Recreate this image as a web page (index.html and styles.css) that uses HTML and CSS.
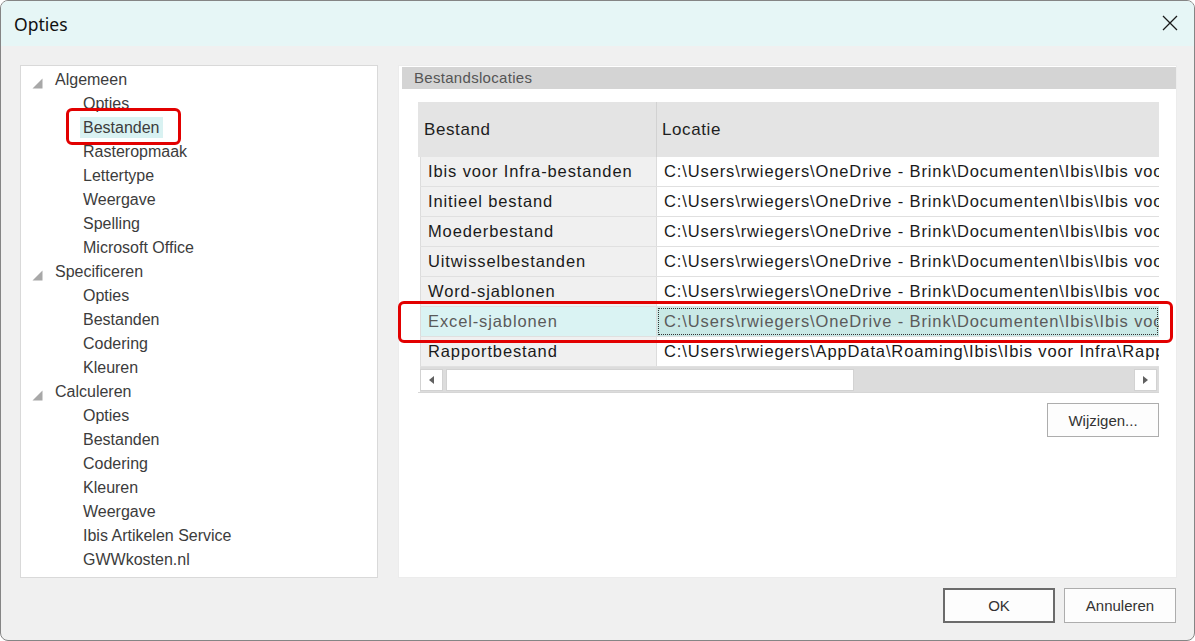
FILE: index.html
```html
<!DOCTYPE html>
<html lang="nl">
<head>
<meta charset="utf-8">
<title>Opties</title>
<link rel="stylesheet" href="styles.css">
</head>
<body>
<div class="window">
  <div class="titlebar">
    <span class="title">Opties</span>
    <svg class="close" width="16" height="16" viewBox="0 0 16 16"><path d="M1 1 L15 15 M15 1 L1 15" stroke="#1a1a1a" stroke-width="1.3" fill="none"/></svg>
  </div>
  <div class="main">
    <div class="tree">
      <div class="node parent"><svg class="arrow" width="11" height="11" viewBox="0 0 11 11"><polygon points="10.5,0.5 10.5,10.5 0.5,10.5" fill="#a8a8a8"/></svg><span class="label">Algemeen</span></div>
      <div class="node child"><span class="label">Opties</span></div>
      <div class="node child"><span class="label selected">Bestanden</span></div>
      <div class="node child"><span class="label">Rasteropmaak</span></div>
      <div class="node child"><span class="label">Lettertype</span></div>
      <div class="node child"><span class="label">Weergave</span></div>
      <div class="node child"><span class="label">Spelling</span></div>
      <div class="node child"><span class="label">Microsoft Office</span></div>
      <div class="node parent"><svg class="arrow" width="11" height="11" viewBox="0 0 11 11"><polygon points="10.5,0.5 10.5,10.5 0.5,10.5" fill="#a8a8a8"/></svg><span class="label">Specificeren</span></div>
      <div class="node child"><span class="label">Opties</span></div>
      <div class="node child"><span class="label">Bestanden</span></div>
      <div class="node child"><span class="label">Codering</span></div>
      <div class="node child"><span class="label">Kleuren</span></div>
      <div class="node parent"><svg class="arrow" width="11" height="11" viewBox="0 0 11 11"><polygon points="10.5,0.5 10.5,10.5 0.5,10.5" fill="#a8a8a8"/></svg><span class="label">Calculeren</span></div>
      <div class="node child"><span class="label">Opties</span></div>
      <div class="node child"><span class="label">Bestanden</span></div>
      <div class="node child"><span class="label">Codering</span></div>
      <div class="node child"><span class="label">Kleuren</span></div>
      <div class="node child"><span class="label">Weergave</span></div>
      <div class="node child"><span class="label">Ibis Artikelen Service</span></div>
      <div class="node child"><span class="label">GWWkosten.nl</span></div>
    </div>
    <div class="panel">
      <div class="panel-head">Bestandslocaties</div>
      <div class="grid">
        <div class="grid-head">
          <div class="hcell c1">Bestand</div>
          <div class="hcell c2">Locatie</div>
        </div>
        <div class="rows">
          <div class="row"><div class="cell c1">Ibis voor Infra-bestanden</div><div class="cell c2">C:\Users\rwiegers\OneDrive - Brink\Documenten\Ibis\Ibis voor Infra</div></div>
          <div class="row"><div class="cell c1">Initieel bestand</div><div class="cell c2">C:\Users\rwiegers\OneDrive - Brink\Documenten\Ibis\Ibis voor Infra</div></div>
          <div class="row"><div class="cell c1">Moederbestand</div><div class="cell c2">C:\Users\rwiegers\OneDrive - Brink\Documenten\Ibis\Ibis voor Infra</div></div>
          <div class="row"><div class="cell c1">Uitwisselbestanden</div><div class="cell c2">C:\Users\rwiegers\OneDrive - Brink\Documenten\Ibis\Ibis voor Infra</div></div>
          <div class="row"><div class="cell c1">Word-sjablonen</div><div class="cell c2">C:\Users\rwiegers\OneDrive - Brink\Documenten\Ibis\Ibis voor Infra</div></div>
          <div class="row sel"><div class="cell c1">Excel-sjablonen</div><div class="cell c2">C:\Users\rwiegers\OneDrive - Brink\Documenten\Ibis\Ibis voor Infra</div></div>
          <div class="row"><div class="cell c1">Rapportbestand</div><div class="cell c2">C:\Users\rwiegers\AppData\Roaming\Ibis\Ibis voor Infra\Rapporten</div></div>
        </div>
        <div class="hscroll">
          <div class="sbtn"><svg width="5" height="8" viewBox="0 0 5 8"><polygon points="5,0 5,8 0,4" fill="#606060"/></svg></div>
          <div class="thumb"></div>
          <div class="track"></div>
          <div class="sbtn"><svg width="5" height="8" viewBox="0 0 5 8"><polygon points="0,0 0,8 5,4" fill="#606060"/></svg></div>
        </div>
      </div>
      <div class="panel-actions">
        <button class="btn">Wijzigen...</button>
      </div>
    </div>
  </div>
  <div class="footer">
    <button class="btn default">OK</button>
    <button class="btn">Annuleren</button>
  </div>
  <div class="mark mark-tree"></div>
  <div class="mark mark-row"></div>
</div>
</body>
</html>
```
FILE: styles.css
```css
html, body {
  margin: 0;
  padding: 0;
  background: #ffffff;
}
.window {
  position: relative;
  width: 1195px;
  height: 641px;
  box-sizing: border-box;
  border: 1px solid #858585;
  border-radius: 8px;
  overflow: hidden;
  background: #f0f0f0;
  display: flex;
  flex-direction: column;
  font-family: "Liberation Sans", Arial, sans-serif;
}
.titlebar {
  height: 45px;
  flex: none;
  background: #e6f6f6;
  display: flex;
  align-items: center;
  justify-content: space-between;
  padding: 0 16px 0 13px;
}
.title {
  font-family: "Noto Sans", "Segoe UI", sans-serif;
  font-size: 17.5px;
  color: #111;
}
.close {
  display: block;
  margin-top: -1px;
}
.main {
  flex: none;
  height: 513px;
  display: flex;
  gap: 20px;
  padding: 19px 17px 0 19px;
}
.tree {
  width: 358px;
  box-sizing: border-box;
  background: #ffffff;
  border: 1px solid #d9d9d9;
  padding-top: 3px;
}
.node {
  height: 24px;
  display: flex;
  align-items: flex-start;
  font-size: 16px;
  color: #3c3c3c;
}
.node.parent {
  padding-left: 11px;
}
.node.child {
  padding-left: 59px;
}
.arrow {
  margin-top: 9px;
  margin-right: 9px;
  flex: none;
}
.label {
  display: inline-block;
  line-height: 21px;
  padding: 0 3px;
  white-space: nowrap;
}
.label.selected {
  background: #d9f2f2;
}
.panel {
  flex: 1;
  background: #ffffff;
  border: 1px solid #ececec;
  box-sizing: border-box;
  padding: 1px 0 0 3px;
}
.panel-head {
  height: 22px;
  line-height: 22px;
  background: #d4d4d4;
  color: #555;
  font-size: 15px;
  letter-spacing: 0.3px;
  padding-left: 12px;
}
.grid {
  margin: 13px 0 0 16px;
  width: 741px;
  border-bottom: 1px solid #d6d6d6;
}
.grid-head {
  height: 55px;
  display: flex;
  background: #e4e4e4;
  font-size: 17px;
  letter-spacing: 0.6px;
  color: #1e1e1e;
  align-items: center;
}
.hcell.c1 {
  width: 239px;
  box-sizing: border-box;
  padding-left: 6px;
  align-self: stretch;
  display: flex;
  align-items: center;
  border-right: 1px solid #d2d2d2;
}
.hcell.c2 {
  padding-left: 5px;
}
.rows {
  padding-left: 2px;
}
.row {
  display: flex;
  height: 30px;
  box-sizing: border-box;
  border-bottom: 1px solid #e0e0e0;
  font-size: 16.5px;
  letter-spacing: 0.88px;
  color: #1a1a1a;
}
.cell {
  line-height: 29px;
  white-space: nowrap;
  overflow: hidden;
}
.cell.c1 {
  width: 237px;
  flex: none;
  box-sizing: border-box;
  background: #f0f0f0;
  border-left: 1px solid #dcdcdc;
  border-right: 1px solid #dcdcdc;
  padding-left: 7px;
}
.cell.c2 {
  flex: 1;
  background: #ffffff;
  padding-left: 7px;
}
.row.sel .cell {
  color: #5a5a5a;
}
.row.sel .cell.c1 {
  background: #daf3f3;
}
.row.sel .cell.c2 {
  background: #c9e9e6;
  outline: 1px dotted #333;
  outline-offset: -2px;
}
.hscroll {
  height: 25px;
  box-sizing: border-box;
  display: flex;
  align-items: center;
  background: #dcdcdc;
  margin-left: 2px;
  padding: 0 2px 0 0;
}
.sbtn {
  width: 23px;
  height: 22px;
  box-sizing: border-box;
  background: #ffffff;
  border: 1px solid #d2d2d2;
  display: flex;
  align-items: center;
  justify-content: center;
}
.thumb {
  width: 408px;
  height: 22px;
  box-sizing: border-box;
  margin-left: 3px;
  background: #ffffff;
  border: 1px solid #d2d2d2;
}
.track {
  flex: 1;
}
.panel-actions {
  width: 741px;
  margin: 10px 0 0 16px;
  display: flex;
  justify-content: flex-end;
}
.btn {
  width: 112px;
  height: 34px;
  box-sizing: border-box;
  background: #fdfdfd;
  border: 1px solid #adadad;
  border-radius: 0;
  font-family: "Liberation Sans", Arial, sans-serif;
  font-size: 15px;
  color: #333;
  padding: 0;
}
.btn.default {
  border: 2px solid #6b6b6b;
}
.footer {
  flex: none;
  display: flex;
  justify-content: flex-end;
  gap: 9px;
  padding: 10px 18px 0 0;
}
.footer .btn {
  height: 35px;
}
.mark {
  position: absolute;
  box-sizing: border-box;
  border: 3.5px solid #e20000;
  border-radius: 6px;
  pointer-events: none;
}
.mark-tree {
  left: 65px;
  top: 107px;
  width: 115px;
  height: 37px;
}
.mark-row {
  left: 397px;
  top: 300px;
  width: 775px;
  height: 42px;
}
```
